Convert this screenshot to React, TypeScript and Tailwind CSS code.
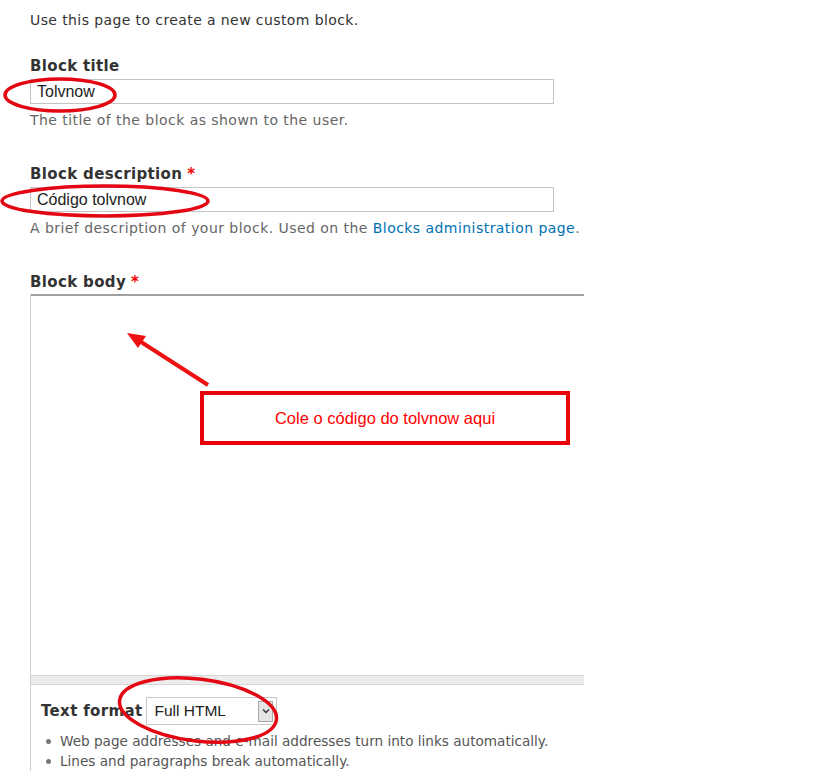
import React from "react";

const sans = { fontFamily: '"DejaVu Sans", "Liberation Sans", sans-serif' };

function Annotations() {
  return (
    <>
      <svg className="pointer-events-none absolute left-0 top-0" width="818" height="774">
        <ellipse cx="60" cy="95" rx="55" ry="16" fill="none" stroke="#e30613" strokeWidth="3.5" />
        <ellipse cx="105" cy="201" rx="103" ry="15" fill="none" stroke="#e30613" strokeWidth="3.5" />
        <ellipse cx="198" cy="710" rx="79" ry="31" transform="rotate(7 198 710)" fill="none" stroke="#e30613" strokeWidth="3.5" />
        <line x1="208" y1="385" x2="138" y2="340" stroke="#ee1111" strokeWidth="4" />
        <polygon points="127,333 146,336 138,348" fill="#ee1111" />
      </svg>
      <div className="absolute left-[200px] top-[391px] flex h-[54px] w-[370px] items-center justify-center border-4 border-[#e8000b] bg-white">
        <span className="text-[16.5px] text-[#ff0000]" style={{ fontFamily: '"Liberation Sans", Arial, sans-serif' }}>
          Cole o código do tolvnow aqui
        </span>
      </div>
    </>
  );
}

function Label({ text, required }: { text: string; required?: boolean }) {
  return (
    <div className="text-[15px] font-bold leading-5 tracking-[0.35px] text-[#333]">
      {text}
      {required && <span className="ml-[5px] text-[#e00]">*</span>}
    </div>
  );
}

function TextInput({ value }: { value: string }) {
  return (
    <div
      className="mt-[3px] flex h-[25px] w-[524px] items-center border border-[#c4c4c4] bg-white px-[6px] text-[16px] text-[#222]"
      style={{ fontFamily: '"Liberation Sans", Arial, sans-serif' }}
    >
      {value}
    </div>
  );
}

export default function App() {
  return (
    <div className="relative h-[774px] w-[818px] overflow-hidden bg-white" style={sans}>
      <div className="pl-[30px] pt-[10px]">
        <p className="text-[14px] leading-5 tracking-[0.4px] text-[#333]">Use this page to create a new custom block.</p>

        <div className="mt-[26px]">
          <Label text="Block title" />
          <TextInput value="Tolvnow" />
          <p className="mt-[6px] text-[14px] leading-5 tracking-[0.45px] text-[#666]">The title of the block as shown to the user.</p>
        </div>

        <div className="mt-[34px]">
          <Label text="Block description" required />
          <TextInput value="Código tolvnow" />
          <p className="mt-[6px] text-[14px] leading-5 tracking-[0.45px] text-[#666]">
            A brief description of your block. Used on the{" "}
            <a className="text-[#0071b3]">Blocks administration page</a>.
          </p>
        </div>

        <div className="mt-[34px] w-[554px]">
          <Label text="Block body" required />
          <div className="mt-[2px] border-l border-[#cfcfcf]">
            <div className="h-[381px] border-t-2 border-[#a0a0a0] bg-white" />
            <div className="h-[10px] border-y border-[#d6d6d6] bg-[#ececec]" />
            <div className="px-[10px] pt-[12px]">
              <div className="flex items-center gap-[4px]">
                <span className="text-[15px] font-bold tracking-[0.35px] text-[#333]">Text format</span>
                <div
                  className="flex h-[28px] w-[131px] items-center justify-between border border-[#c8c8c8] bg-white pl-[7px] pr-[3px] text-[15.5px] text-[#222]"
                  style={{ fontFamily: '"Liberation Sans", Arial, sans-serif' }}
                >
                  Full HTML
                  <span className="flex h-[21px] w-[15px] items-center justify-center border border-[#a8a8a8] bg-[#e4e4e4]">
                    <svg width="8" height="6" viewBox="0 0 8 6">
                      <path d="M1 1.5 L4 4.5 L7 1.5" fill="none" stroke="#333" strokeWidth="1.4" />
                    </svg>
                  </span>
                </div>
              </div>
              <ul className="mt-[6px] text-[13.6px] leading-5 text-[#555]">
                <li className="flex items-center gap-[9px] pl-[5px]">
                  <span className="h-[5px] w-[5px] rounded-full bg-[#777]" />
                  Web page addresses and e-mail addresses turn into links automatically.
                </li>
                <li className="flex items-center gap-[9px] pl-[5px]">
                  <span className="h-[5px] w-[5px] rounded-full bg-[#777]" />
                  Lines and paragraphs break automatically.
                </li>
              </ul>
            </div>
          </div>
        </div>
      </div>
      <Annotations />
    </div>
  );
}
